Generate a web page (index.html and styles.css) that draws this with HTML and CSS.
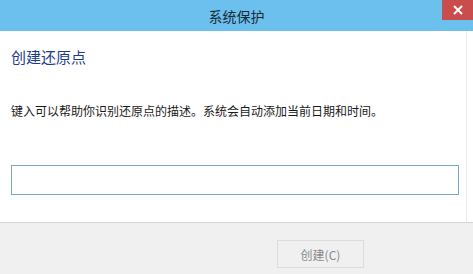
FILE: index.html
```html
<!DOCTYPE html>
<html lang="zh-CN">
<head>
  <meta charset="UTF-8">
  <title>系统保护</title>
  <link rel="stylesheet" href="styles.css">
</head>
<body>
  <div class="window">
    <div class="titlebar">
      <span class="title">系统保护</span>
      <button class="close">
        <svg width="10" height="10" viewBox="0 0 10 10"><path d="M1 1L9 9M9 1L1 9" stroke="#fff" stroke-width="2"/></svg>
      </button>
    </div>
    <div class="content">
      <h1>创建还原点</h1>
      <p>键入可以帮助你识别还原点的描述。系统会自动添加当前日期和时间。</p>
      <input type="text" class="desc">
    </div>
    <div class="footer">
      <button class="create">创建(C)</button>
    </div>
  </div>
</body>
</html>
```

FILE: styles.css
```css
body {
  margin: 0;
  font-family: "Noto Sans CJK SC", "Microsoft YaHei", sans-serif;
  background: #fff;
}
.window {
  width: 473px;
  height: 274px;
  display: flex;
  flex-direction: column;
}
.titlebar {
  height: 31px;
  background: #6bc0ee;
  display: flex;
  justify-content: center;
  align-items: center;
  position: relative;
}
.title {
  font-size: 14px;
  color: #1b2a36;
}
.close {
  position: absolute;
  top: 0;
  right: 0;
  width: 31px;
  height: 20px;
  border: none;
  background: #c94d4d;
  display: flex;
  align-items: center;
  justify-content: center;
  padding: 0;
}
.content {
  height: 191px;
  padding: 0 11px;
  border-right: 1px solid #eaeaea;
  margin-right: 6px;
}
.content h1 {
  margin: 14px 0 0;
  font-size: 15px;
  font-weight: normal;
  color: #1f3c8c;
  line-height: 24px;
}
.content p {
  margin: 33px 0 0;
  font-size: 12px;
  color: #1a1a1a;
  line-height: 18px;
}
.desc {
  display: block;
  box-sizing: border-box;
  margin-top: 45px;
  width: 448px;
  height: 30px;
  border: 1px solid #7aa7c7;
  outline: none;
}
.footer {
  flex: 1;
  background: #f0f0f0;
  border-top: 1px solid #d5d5d5;
  display: flex;
  justify-content: flex-end;
  padding: 17px 109px 0 0;
}
.create {
  width: 87px;
  height: 28px;
  border: 1px solid #dcdcdc;
  background: #f0f0f0;
  color: #8a8a8a;
  font-family: inherit;
  font-size: 12px;
}
```
